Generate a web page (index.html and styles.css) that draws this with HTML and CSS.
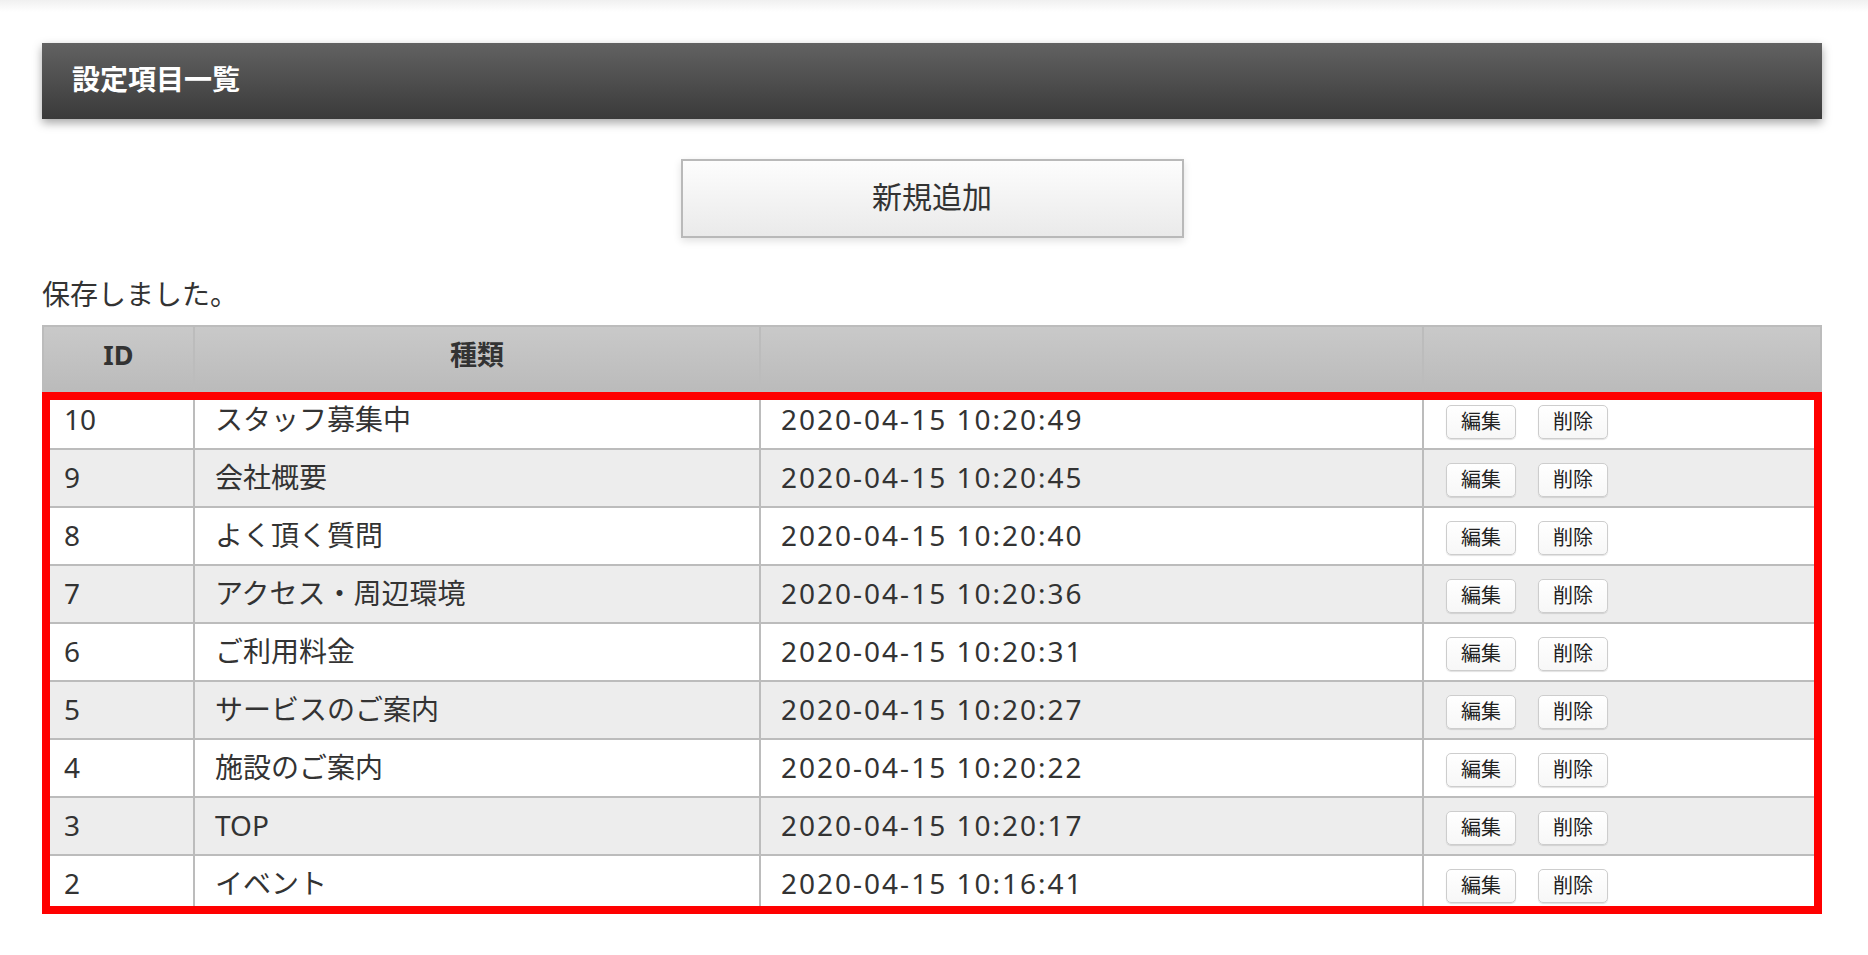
FILE: index.html
```html
<!DOCTYPE html>
<html lang="ja">
<head>
    <meta charset="utf-8">
    <title>設定項目一覧</title>
    <link rel="stylesheet" href="styles.css">
</head>
<body>
    <div class="wrap">
        <h1 class="page-title">設定項目一覧</h1>

        <div class="add-area">
            <button class="add-btn" type="button">新規追加</button>
        </div>

        <p class="notice">保存しました。</p>

        <div class="list">
            <table class="items">
                <thead>
                    <tr>
                        <th class="col-id">ID</th>
                        <th class="col-kind">種類</th>
                        <th class="col-date"></th>
                        <th class="col-act"></th>
                    </tr>
                </thead>
                <tbody>
                    <tr>
                        <td>10</td>
                        <td>スタッフ募集中</td>
                        <td class="date">2020-04-15 10:20:49</td>
                        <td class="act"><button class="mini">編集</button><button class="mini">削除</button></td>
                    </tr>
                    <tr>
                        <td>9</td>
                        <td>会社概要</td>
                        <td class="date">2020-04-15 10:20:45</td>
                        <td class="act"><button class="mini">編集</button><button class="mini">削除</button></td>
                    </tr>
                    <tr>
                        <td>8</td>
                        <td>よく頂く質問</td>
                        <td class="date">2020-04-15 10:20:40</td>
                        <td class="act"><button class="mini">編集</button><button class="mini">削除</button></td>
                    </tr>
                    <tr>
                        <td>7</td>
                        <td>アクセス・周辺環境</td>
                        <td class="date">2020-04-15 10:20:36</td>
                        <td class="act"><button class="mini">編集</button><button class="mini">削除</button></td>
                    </tr>
                    <tr>
                        <td>6</td>
                        <td>ご利用料金</td>
                        <td class="date">2020-04-15 10:20:31</td>
                        <td class="act"><button class="mini">編集</button><button class="mini">削除</button></td>
                    </tr>
                    <tr>
                        <td>5</td>
                        <td>サービスのご案内</td>
                        <td class="date">2020-04-15 10:20:27</td>
                        <td class="act"><button class="mini">編集</button><button class="mini">削除</button></td>
                    </tr>
                    <tr>
                        <td>4</td>
                        <td>施設のご案内</td>
                        <td class="date">2020-04-15 10:20:22</td>
                        <td class="act"><button class="mini">編集</button><button class="mini">削除</button></td>
                    </tr>
                    <tr>
                        <td>3</td>
                        <td>TOP</td>
                        <td class="date">2020-04-15 10:20:17</td>
                        <td class="act"><button class="mini">編集</button><button class="mini">削除</button></td>
                    </tr>
                    <tr>
                        <td>2</td>
                        <td>イベント</td>
                        <td class="date">2020-04-15 10:16:41</td>
                        <td class="act"><button class="mini">編集</button><button class="mini">削除</button></td>
                    </tr>
                </tbody>
            </table>
            <div class="highlight"></div>
        </div>
    </div>
</body>
</html>
```

FILE: styles.css
```css
body { margin: 0; background: #fff linear-gradient(#f0f0f0, #fff 12px) no-repeat; color: #333; font-family: "Noto Sans", "Noto Sans CJK JP", sans-serif; }
.wrap { padding: 43px 46px 40px 42px; }

.page-title { margin: 0; height: 72px; line-height: 72px; padding: 0 0 4px 30px; font-size: 28px; font-weight: bold; color: #fff; background: linear-gradient(#626262, #3a3a3a); box-shadow: 0 4px 9px rgba(0, 0, 0, 0.35); }

.add-area { margin-top: 40px; text-align: center; }
.add-btn { width: 503px; height: 79px; padding: 0 0 7px; font-family: inherit; font-size: 30px; color: #333; border: 2px solid #b9b9b9; background: linear-gradient(#fdfdfd, #eaeaea); box-shadow: 0 3px 8px rgba(0, 0, 0, 0.12); }

.notice { margin: 35px 0 10px; font-size: 28px; line-height: 42px; }

.list { position: relative; }
.items { width: 100%; border-collapse: collapse; font-size: 28px; }
.items th, .items td { border: 2px solid #bcbcbc; }
.items th { height: 55px; padding: 0 0 8px; line-height: 40px; font-size: 27px; font-weight: bold; background: linear-gradient(#c9c9c9, #bbbbbb); }
.items td { height: 42px; padding: 6px 20px 8px; line-height: 40px; background: #fff; }
.items tbody tr:nth-child(even) td { background: #ededed; }
.col-id { width: 149px; }
.col-kind { width: 564px; }
.col-date { width: 661px; }
.date { letter-spacing: 2px; }
.act { padding-left: 22px !important; }

.mini { width: 70px; height: 34px; margin-right: 22px; padding: 0; font-family: inherit; font-size: 20px; line-height: 1; color: #222; border: 1px solid #cdcdcd; border-radius: 5px; background: linear-gradient(#fff, #f7f7f7); box-shadow: 0 1px 1px rgba(0, 0, 0, 0.12); vertical-align: middle; }

/* red frame around the rows */
.highlight { position: absolute; top: 67px; left: 0; right: 0; bottom: 0; border: 8px solid #f00; pointer-events: none; }
```
